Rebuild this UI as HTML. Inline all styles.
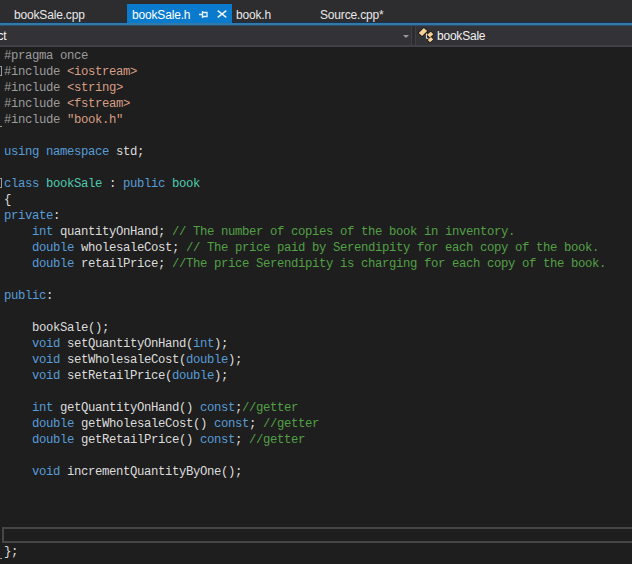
<!DOCTYPE html>
<html><head><meta charset="utf-8">
<style>
*{margin:0;padding:0;box-sizing:border-box}
html,body{width:632px;height:564px;overflow:hidden;background:#1e1e1e}
body{position:relative;font-family:"Liberation Sans",sans-serif}
.abs{position:absolute}
#well{left:0;top:0;width:632px;height:23px;background:#2d2d30}
#tabline{left:0;top:22px;width:632px;height:4px;background:linear-gradient(#15334f 0,#15334f 1px,#3378a8 1px,#3378a8 3px,#2c4f6c 3px)}
#acttab{left:127px;top:4px;width:105px;height:19px;background:#0a7bcc}
.tab{position:absolute;top:7px;font-size:12px;letter-spacing:-0.17px;line-height:16px;color:#e8e8e8;white-space:nowrap}
#nav{left:0;top:26px;width:632px;height:21px;background:#2d2d30}
.combo{position:absolute;top:26px;height:20px;background:#333337;border:1px solid #3f3f46;border-top:0}
#navbot{left:0;top:45px;width:632px;height:2px;background:#404045}
.navtxt{position:absolute;top:28px;font-size:12px;letter-spacing:-0.22px;line-height:16px;color:#f1f1f1;white-space:nowrap}
#code{left:4px;top:48px;font-family:"Liberation Mono",monospace;font-size:12.3px;letter-spacing:-0.381px;line-height:16px;color:#dcdcdc;white-space:pre}
.k{color:#569cd6}.c{color:#52a046}.t{color:#4ec9b0}.p{color:#9b9b9b}.s{color:#d69d85}
#curline{left:2px;top:527px;width:640px;height:16px;border:2px solid #464646}
.obox{position:absolute;left:-7px;width:9px;height:10px;border:1px solid #9a9a9a}
.otick{position:absolute;left:0;width:2px;height:1px;background:#9a9a9a}
</style></head><body>
<div id="well" class="abs"></div>
<div id="tabline" class="abs"></div>
<div id="acttab" class="abs"></div>
<div class="tab" style="left:14px">bookSale.cpp</div>
<div class="tab" style="left:132px;color:#fff">bookSale.h</div>
<svg class="abs" style="left:197px;top:9px" width="32" height="11" viewBox="0 0 32 11">
 <path d="M2 5.5H5.5M5.5 2V9M5.5 3.5H10V7.5H5.5" stroke="#e8f4fc" stroke-width="1.3" fill="none"/>
 <path d="M20.7 1.7L29.3 8.3M29.3 1.7L20.7 8.3" stroke="#e8f4fc" stroke-width="1.5" fill="none"/>
</svg>
<div class="tab" style="left:236px">book.h</div>
<div class="tab" style="left:320px">Source.cpp*</div>

<div id="nav" class="abs"></div>
<div class="combo" style="left:-10px;width:422px"></div>
<div class="combo" style="left:415px;width:230px"></div>
<div id="navbot" class="abs"></div>
<div class="navtxt" style="left:-2.5px">ct</div>
<svg class="abs" style="left:403px;top:35px" width="6" height="3"><path d="M0 0H6L3 3Z" fill="#999"/></svg>
<svg class="abs" style="left:417px;top:27px" width="17" height="16" viewBox="0 0 17 16">
 <g fill="#141414" stroke="#141414" stroke-width="1.4" stroke-linejoin="round">
 <path d="M1.7 5.9L6.8 0.9L10.2 4.1L5.1 9.1Z"/><path d="M13.8 4.7L16.4 7.2L12.8 10.4L10 7.8Z"/><path d="M14 10.1L16.4 12.4L13 15.2L10.6 13Z"/>
 </g>
 <g fill="#f8cf94">
 <path d="M1.7 5.9L6.8 0.9L10.2 4.1L5.1 9.1Z"/><path d="M13.8 4.7L16.4 7.2L12.8 10.4L10 7.8Z"/><path d="M14 10.1L16.4 12.4L13 15.2L10.6 13Z"/>
 </g>
 <path d="M10.3 8.4L12.3 10.2L10.3 10.8Z" fill="#141414"/>
 <path d="M9.4 6.5V11.3H11.4" stroke="#e8e8e8" stroke-width="1" fill="none"/>
</svg>
<div class="navtxt" style="left:437px">bookSale</div>

<div id="curline" class="abs"></div>
<div class="obox" style="top:66px"></div>
<div class="otick" style="top:126px"></div>
<div class="obox" style="top:178px"></div>
<div class="otick" style="top:558px"></div>

<div id="code" class="abs"><span class="p">#pragma once</span>
<span class="p">#include</span> <span class="s">&lt;iostream&gt;</span>
<span class="p">#include</span> <span class="s">&lt;string&gt;</span>
<span class="p">#include</span> <span class="s">&lt;fstream&gt;</span>
<span class="p">#include</span> <span class="s">"book.h"</span>

<span class="k">using</span> <span class="k">namespace</span> std;

<span class="k">class</span> <span class="t">bookSale</span> : <span class="k">public</span> <span class="t">book</span>
{
<span class="k">private</span>:
    <span class="k">int</span> quantityOnHand; <span class="c">// The number of copies of the book in inventory.</span>
    <span class="k">double</span> wholesaleCost; <span class="c">// The price paid by Serendipity for each copy of the book.</span>
    <span class="k">double</span> retailPrice; <span class="c">//The price Serendipity is charging for each copy of the book.</span>

<span class="k">public</span>:

    bookSale();
    <span class="k">void</span> setQuantityOnHand(<span class="k">int</span>);
    <span class="k">void</span> setWholesaleCost(<span class="k">double</span>);
    <span class="k">void</span> setRetailPrice(<span class="k">double</span>);

    <span class="k">int</span> getQuantityOnHand() <span class="k">const</span>;<span class="c">//getter</span>
    <span class="k">double</span> getWholesaleCost() <span class="k">const</span>; <span class="c">//getter</span>
    <span class="k">double</span> getRetailPrice() <span class="k">const</span>; <span class="c">//getter</span>

    <span class="k">void</span> incrementQuantityByOne();




};</div>
</body></html>
